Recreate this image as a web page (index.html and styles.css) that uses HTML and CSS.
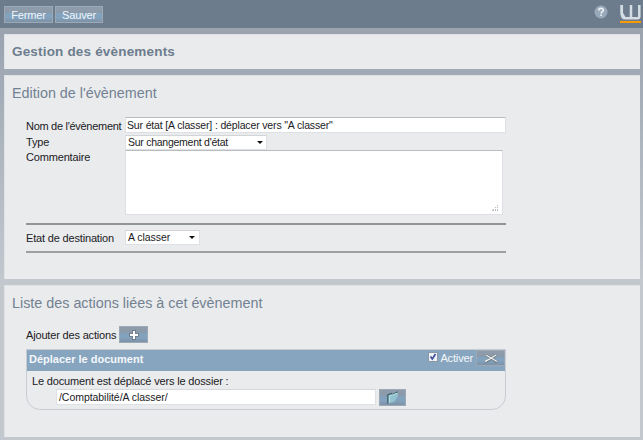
FILE: index.html
```
<!DOCTYPE html>
<html lang="fr">
<head>
<meta charset="utf-8">
<title>Gestion des évènements</title>
<link rel="stylesheet" href="styles.css">
</head>
<body>
<header class="toolbar">
  <button class="btn btn-close">Fermer</button>
  <button class="btn btn-save">Sauver</button>
  <svg class="help" width="14" height="14" viewBox="0 0 14 14"><circle cx="7" cy="7" r="6.5" fill="#98a9ba"/><path d="M4.7 5.4C4.7 2.6 9.3 2.7 9.3 5.2C9.3 6.8 7.1 6.7 7.1 8.5M7.1 9.6V11" fill="none" stroke="#e9eef3" stroke-width="1.7"/></svg>
  <svg class="logo" width="21" height="20" viewBox="0 0 21 20"><path d="M1.8 0V7.5Q2 13.2 5 13.2H10.5M11 0V13.2H17.6Q19.3 13.2 19.3 11.5V0" fill="none" stroke="#d5dde4" stroke-width="2.5"/><path d="M.5 0H3V8L5.5 12L4 14.4Q.5 13 .5 8z" fill="#d5dde4"/><path d="M0 16H21V18H0z" fill="#f79a05"/></svg>
</header>
<main class="content">
  <section class="panel panel-title"><h1>Gestion des évènements</h1></section>
  <section class="panel panel-edit">
    <h2>Edition de l'évènement</h2>
    <div class="form">
      <div class="row row-name"><span class="label">Nom de l'évènement</span><div class="field field-name">Sur état [A classer] : déplacer vers "A classer"</div></div>
      <div class="row row-type"><span class="label">Type</span><div class="field select select-type"><span>Sur changement d'état</span><i class="arrow"></i></div></div>
      <div class="row row-comment"><span class="label">Commentaire</span><div class="field area"><svg width="7" height="7" viewBox="0 0 7 7"><path d="M5 0h1v1H5zM3 2h1v1H3zM5 2h1v1H5zM1 4h1v1H1zM3 4h1v1H3zM5 4h1v1H5zM0 5h2v1H0zM3 5h1v1H3zM5 5h1v1H5z" fill="#bcbcbc"/></svg></div></div>
      <div class="rule rule-first"></div>
      <div class="row row-state"><span class="label">Etat de destination</span><div class="field select select-state"><span>A classer</span><i class="arrow"></i></div></div>
      <div class="rule rule-last"></div>
    </div>
  </section>
  <section class="panel panel-actions">
    <h2>Liste des actions liées à cet évènement</h2>
    <div class="add"><span>Ajouter des actions</span>
      <button class="btn btn-add"><svg width="10" height="10" viewBox="0 0 10 10"><path d="M5 0V10M0 5H10" stroke="#6d7987" stroke-width="3.6"/><path d="M5 1V9M1 5H9" stroke="#fff" stroke-width="2"/></svg></button>
    </div>
    <div class="card">
      <div class="card-head">
        <b>Déplacer le document</b>
        <span class="check"><svg width="8" height="8" viewBox="0 0 8 8"><path d="M1.5 3.5L3.3 6L6.5 1" fill="none" stroke="#3f519d" stroke-width="1.7"/></svg></span>
        <span class="active">Activer</span>
        <button class="btn btn-delete"><svg width="14" height="9" viewBox="0 0 14 9"><path d="M1 8L5 6L12 1M2 1L7 4L13 8" fill="none" stroke="#66727e" stroke-width="2.6"/><path d="M1 7.5L5 5.5L12 1M2 1L7 4L13 7.5" fill="none" stroke="#f2f2ec" stroke-width="1.4"/></svg></button>
      </div>
      <p>Le document est déplacé vers le dossier :</p>
      <div class="path"><div class="field field-path">/Comptabilité/A classer/</div>
        <button class="btn btn-folder"><svg width="12" height="13" viewBox="0 0 12 13"><path d="M.8 12V3.5L5 2L6 3L10.8 .5V5L7 11L2 12z" fill="#94c4d1"/><path d="M.8 12.5V4L4.5 2.5L5.5 3.5L10.8 .8" fill="none" stroke="#405f6c" stroke-width="1.3"/><path d="M2.5 11.5V5L10.5 2" fill="none" stroke="#b7dde4"/></svg></button>
      </div>
    </div>
  </section>
</main>
</body>
</html>
```
FILE: styles.css
```
* { box-sizing: border-box; }
body {
  margin: 0;
  width: 643px;
  height: 440px;
  overflow: hidden;
  font: 11px/14px "Liberation Sans", Arial, sans-serif;
  color: #202124;
  background: linear-gradient(#9ba4ae 28px, #a4adb7 90px, #c3c8cf 280px, #c3c8cf);
}
h1, h2, p { margin: 0; }
svg { display: block; flex: none; }
.toolbar {
  display: flex;
  height: 28px;
  padding: 6px 2px 0 4px;
  background: #6d7c8c;
}
.btn {
  display: flex;
  align-items: center;
  justify-content: center;
  flex: none;
  height: 17px;
  padding: 0;
  border: 1px solid #9ba8b6;
  font: 11px/14px "Liberation Sans", Arial, sans-serif;
  letter-spacing: -.15px;
  color: #f2f5f8;
  background: linear-gradient(#8e9cab, #8b9aaa 38%, #82a1bd 42%, #83a2be 70%, #7e92a6);
}
.btn-close { width: 49px; margin-right: 2px; }
.btn-save { width: 48px; }
.help { margin: -1px 12px 0 auto; }
.logo { margin-top: -1px; }
.content {
  display: flex;
  flex-direction: column;
  gap: 6px;
  padding: 6px 3px 0 4px;
}
.panel {
  flex: none;
  background: #eaebed;
  border: 1px solid #dfe2e5;
  border-width: 1px 0 0 1px;
}
.panel-title { height: 35px; padding: 9px 0 0 7px; }
.panel-edit { height: 204px; padding: 9px 0 0 7px; }
.panel-actions { height: 152px; padding: 9px 0 0 7px; }
h1 { font-size: 13.5px; line-height: 16px; color: #6d7d8d; letter-spacing: .18px; }
h2 { font-size: 14.35px; line-height: 17px; font-weight: normal; color: #728292; }
.form { width: 480px; margin: 15px 0 0 14px; }
.row { display: flex; }
.label { width: 99px; flex: none; white-space: nowrap; letter-spacing: -.17px; }
.row-name { height: 17px; }
.row-name .label { padding-top: 2px; letter-spacing: -.29px; }
.row-type { height: 16px; }
.row-type .label { padding-top: 1px; }
.row-comment { height: 66px; }
.row-state { height: 20px; padding-top: 5px; }
.row-state .label { padding-top: 1px; }
.field {
  height: 16px;
  padding: 0 1px;
  border: 1px solid #dde0e5;
  border-top-color: #b9bcc0;
  background: #fff;
  font-size: 10.5px;
  line-height: 15px;
  letter-spacing: -.15px;
  white-space: nowrap;
}
.field-name { width: 382px; }
.select {
  display: flex;
  justify-content: space-between;
  align-items: center;
  height: 15px;
  padding: 0 3px 0 2px;
  border-top-color: #d2d4d7;
}
.select-type { width: 142px; margin-top: 1px; letter-spacing: -.26px; }
.select-state { width: 75px; letter-spacing: -.05px; }
.select-state .arrow { margin-right: 1px; }
.arrow { border: 3px solid transparent; border-top: 3px solid #111; border-bottom: 0; }
.area {
  display: flex;
  justify-content: flex-end;
  align-items: flex-end;
  width: 378px;
  height: 65px;
  padding: 0 3px 2px;
}
.rule { height: 2px; background: #909597; }
.rule-first { margin-top: 7px; }
.rule-last { margin-top: 6px; background: #9da0a1; }
.add { display: flex; align-items: center; height: 17px; margin: 14px 0 0 14px; letter-spacing: -.17px; }
.add span { width: 91px; white-space: nowrap; }
.btn-add { width: 29px; margin-left: 2px; }
.card {
  width: 480px;
  height: 61px;
  margin: 6px 0 0 14px;
  border: 1px solid #c8ccd2;
  border-radius: 0 0 14px 14px;
}
.card-head {
  display: flex;
  height: 21px;
  padding-left: 2px;
  color: #f4f7fa;
  background: #88a5c0;
}
.card-head b { margin-top: 2px; }
.check {
  width: 10px;
  height: 10px;
  margin: 2px 2px 0 auto;
  background: #eef1f6;
  border: 1px solid #8b98a5;
}
.active { margin: 1px 3px 0 0; letter-spacing: -.15px; }
.btn-delete { width: 29px; height: 16px; }
.card p { margin: 3px 0 1px 5px; letter-spacing: -.16px; }
.path { display: flex; margin: 0 0 0 29px; }
.field-path { width: 320px; padding-left: 2px; border-top-color: #d5d8dc; letter-spacing: -.05px; }
.btn-folder { width: 27px; margin-left: 3px; }
```
